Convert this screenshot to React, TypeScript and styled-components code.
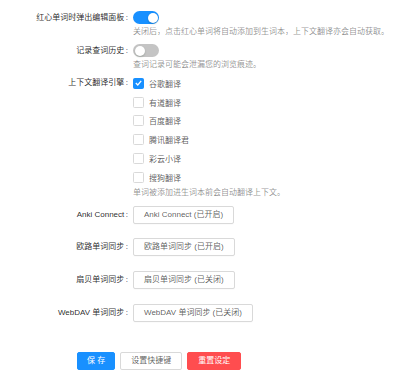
import styled, { createGlobalStyle } from 'styled-components';

const GlobalStyle = createGlobalStyle`
  body {
    margin: 0;
    background: #fff;
    font-family: "Liberation Sans", "Noto Sans CJK SC", sans-serif;
    font-size: 8px;
    color: rgba(0, 0, 0, 0.85);
  }
`;

const Page = styled.div`
  width: 400px;
  padding-top: 11px;
`;

const FormItem = styled.div<{ $mb?: number }>`
  display: grid;
  grid-template-columns: 133px 1fr;
  margin-bottom: ${p => p.$mb ?? 0}px;
`;

const Label = styled.div<{ $h: number }>`
  text-align: right;
  height: ${p => p.$h}px;
  line-height: ${p => p.$h}px;
  white-space: nowrap;
  color: rgba(0, 0, 0, 0.85);

  &::after {
    content: ':';
    margin: 0 5px 0 1.5px;
  }
`;

const Control = styled.div`
  display: flex;
  flex-direction: column;
  align-items: flex-start;
`;

const Help = styled.div<{ $lh: number }>`
  line-height: ${p => p.$lh}px;
  color: rgba(0, 0, 0, 0.45);
  white-space: nowrap;
`;

const SwitchTrack = styled.div<{ $on?: boolean }>`
  position: relative;
  width: 26px;
  height: 13px;
  border-radius: 7px;
  background: ${p => (p.$on ? '#1890ff' : '#c4c4c4')};
`;

const SwitchKnob = styled.div<{ $on?: boolean }>`
  position: absolute;
  top: 1.5px;
  left: ${p => (p.$on ? '14.5px' : '1.5px')};
  width: 10px;
  height: 10px;
  border-radius: 50%;
  background: #fff;
  box-shadow: 0 1px 2px rgba(0, 35, 11, 0.2);
`;

const CheckRow = styled.div`
  display: flex;
  align-items: center;
  gap: 5px;
  height: 18.8px;
  color: rgba(0, 0, 0, 0.65);
`;

const Box = styled.span<{ $on?: boolean }>`
  display: flex;
  align-items: center;
  justify-content: center;
  width: 9px;
  height: 9px;
  border-radius: 1.5px;
  border: 1px solid ${p => (p.$on ? '#1890ff' : '#d9d9d9')};
  background: ${p => (p.$on ? '#1890ff' : '#fff')};
`;

const Button = styled.button<{ $kind?: 'primary' | 'danger' }>`
  height: 18px;
  padding: 0 10px;
  border-radius: 2px;
  font-family: inherit;
  font-size: 8px;
  line-height: 16px;
  white-space: nowrap;
  cursor: pointer;
  border: 1px solid
    ${p => (p.$kind === 'primary' ? '#1890ff' : p.$kind === 'danger' ? '#ff4d4f' : '#d9d9d9')};
  background: ${p => (p.$kind === 'primary' ? '#1890ff' : p.$kind === 'danger' ? '#ff4d4f' : '#fff')};
  color: ${p => (p.$kind ? '#fff' : 'rgba(0, 0, 0, 0.65)')};
  box-shadow: 0 1px 0 rgba(0, 0, 0, 0.015);
`;

const Actions = styled.div`
  display: flex;
  gap: 5px;
  padding-left: 77px;
  margin-top: 30px;

  & > button:first-child {
    padding: 0 9px;
  }
`;

const Switch = ({ on }: { on?: boolean }) => (
  <SwitchTrack $on={on}>
    <SwitchKnob $on={on} />
  </SwitchTrack>
);

const Check = ({ on, label }: { on?: boolean; label: string }) => (
  <CheckRow>
    <Box $on={on}>
      {on && (
        <svg width="7" height="6" viewBox="0 0 7 6">
          <path d="M0.8 3 L2.8 5 L6.2 0.9" fill="none" stroke="#fff" strokeWidth="1.3" />
        </svg>
      )}
    </Box>
    {label}
  </CheckRow>
);

const engines = ['谷歌翻译', '有道翻译', '百度翻译', '腾讯翻译君', '彩云小译', '搜狗翻译'];

const syncs = [
  { label: 'Anki Connect', text: 'Anki Connect (已开启)' },
  { label: '欧路单词同步', text: '欧路单词同步 (已开启)' },
  { label: '扇贝单词同步', text: '扇贝单词同步 (已关闭)' },
  { label: 'WebDAV 单词同步', text: 'WebDAV 单词同步 (已关闭)' },
];

export default function App() {
  return (
    <>
      <GlobalStyle />
      <Page>
        <FormItem $mb={4}>
          <Label $h={13}>红心单词时弹出编辑面板</Label>
          <Control>
            <Switch on />
            <Help $lh={16}>关闭后，点击红心单词将自动添加到生词本，上下文翻译亦会自动获取。</Help>
          </Control>
        </FormItem>
        <FormItem $mb={1}>
          <Label $h={13}>记录查词历史</Label>
          <Control>
            <Switch />
            <Help $lh={16}>查词记录可能会泄漏您的浏览痕迹。</Help>
          </Control>
        </FormItem>
        <FormItem $mb={7}>
          <Label $h={18.8}>上下文翻译引擎</Label>
          <Control>
            {engines.map((e, i) => (
              <Check key={e} on={i === 0} label={e} />
            ))}
            <Help $lh={12}>单词被添加进生词本前会自动翻译上下文。</Help>
          </Control>
        </FormItem>
        {syncs.map((s, i) => (
          <FormItem key={s.label} $mb={i < syncs.length - 1 ? 14.7 : 0}>
            <Label $h={18}>{s.label}</Label>
            <Control>
              <Button>{s.text}</Button>
            </Control>
          </FormItem>
        ))}
        <Actions>
          <Button $kind="primary">保 存</Button>
          <Button>设置快捷键</Button>
          <Button $kind="danger">重置设定</Button>
        </Actions>
      </Page>
    </>
  );
}
